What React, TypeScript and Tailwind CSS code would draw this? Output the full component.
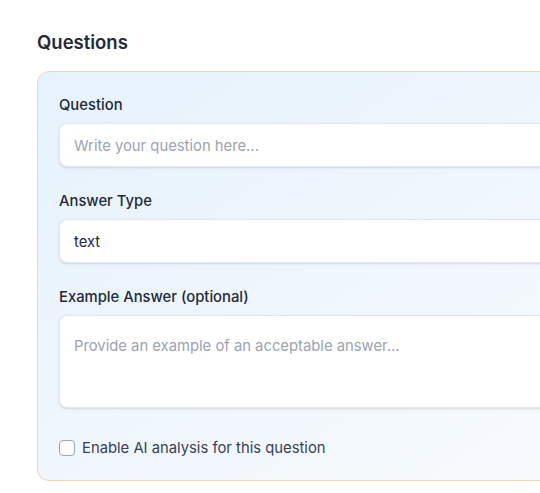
export default function App() {
  return (
    <div
      className="w-[540px] h-[493px] overflow-hidden bg-white"
      style={{ fontFamily: "Inter, 'Noto Sans', sans-serif" }}
    >
      <div className="pl-[37px] pt-[28px]">
        <h2 className="text-[18.5px] leading-7 font-semibold text-[#1f2937] mb-[15px]">Questions</h2>

        {/* Question card */}
        <div className="w-[620px] rounded-xl border border-[#efd9a6] bg-gradient-to-br from-[#e6f2fd] to-[#f9fbfd] pt-[22px] px-[21px] pb-[21px]">
          <label className="block text-[14.8px] leading-[22px] font-medium text-[#1f2937] mb-[7px]">Question</label>
          <input
            type="text"
            placeholder="Write your question here..."
            className="block w-full h-[44px] rounded-lg border border-[#e5e7eb] bg-white px-[14px] pt-[2px] text-[14.8px] text-[#1f2937] placeholder:text-[#9ca3af] shadow-sm outline-none"
          />

          <label className="block text-[14.8px] leading-[22px] font-medium text-[#1f2937] mt-[23px] mb-[7px]">Answer Type</label>
          <div className="flex items-center w-full h-[44px] rounded-lg border border-[#e5e7eb] bg-white px-[14px] pt-[2px] text-[14.8px] text-[#1f2937] shadow-sm">
            text
          </div>

          <label className="block text-[14.8px] leading-[22px] font-medium text-[#1f2937] mt-[23px] mb-[7px]">Example Answer (optional)</label>
          <textarea
            placeholder="Provide an example of an acceptable answer..."
            className="block w-full h-[93px] resize-none rounded-lg border border-[#e5e7eb] bg-white px-[14px] pt-[18px] text-[14.8px] leading-6 text-[#1f2937] placeholder:text-[#9ca3af] shadow-sm outline-none"
          />

          <label className="flex items-center gap-[7px] mt-[29px] text-[14.8px] leading-[22px] text-[#374151]">
            <span className="block w-4 h-4 rounded-[4px] border border-[#9ca3af] bg-white" />
            Enable AI analysis for this question
          </label>
        </div>
      </div>
    </div>
  );
}
